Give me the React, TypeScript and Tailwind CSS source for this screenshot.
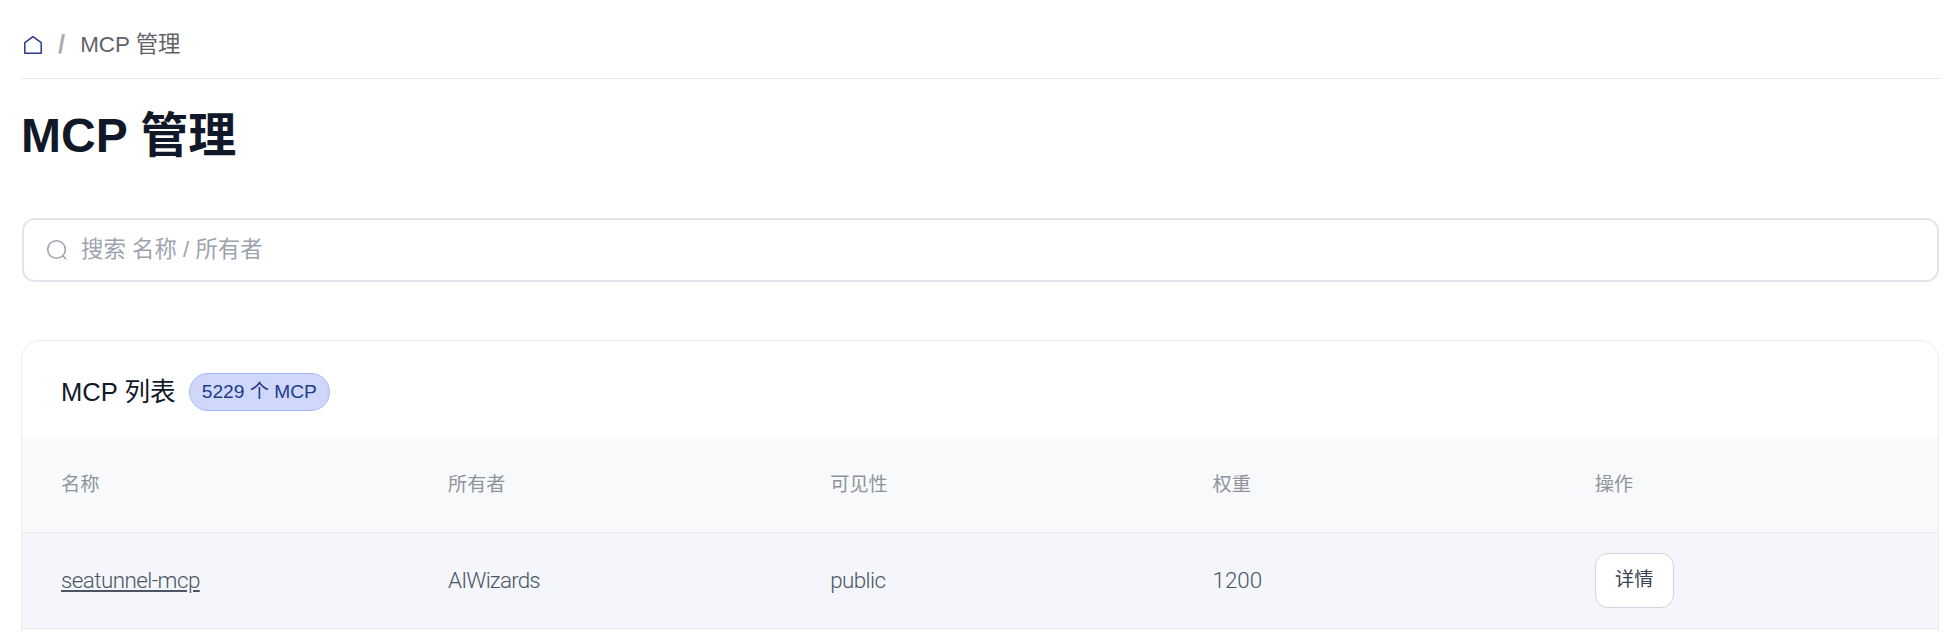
import React from 'react';

const FONT = '"Liberation Sans", "Noto Sans CJK SC", sans-serif';
const LIGHT = 'Roboto, "Noto Sans CJK SC", sans-serif';

const columns = ['名称', '所有者', '可见性', '权重', '操作'];

function HomeIcon() {
  return (
    <svg width="20" height="20" viewBox="0 0 20 20" fill="none" stroke="#2a3a8f" strokeWidth="1.5" strokeLinejoin="round">
      <path d="M1.8 18.3V7.6L10 1.6l8.2 6v10.7z" />
    </svg>
  );
}

function SearchIcon() {
  return (
    <svg width="22" height="22" viewBox="0 0 22 22" fill="none" stroke="#9ca3af" strokeWidth="1.5" strokeLinecap="round">
      <circle cx="10.5" cy="10.5" r="8.8" />
      <path d="M17.2 17.2l2.4 2.4" />
    </svg>
  );
}

export default function App() {
  return (
    <div className="h-[632px] overflow-hidden bg-white pl-[22px] pr-[14px]" style={{ fontFamily: FONT }}>
      {/* Breadcrumb */}
      <nav className="flex h-[79px] items-center border-b border-[#e8e9ec] pt-[11px] pl-px">
        <HomeIcon />
        <span className="ml-[15px] text-[25.6px] font-bold text-[#a9adb4]">/</span>
        <span className="ml-[15px] text-[22.4px] text-[#5f6368]">MCP 管理</span>
      </nav>

      <h1 className="mt-[28px] -ml-px text-[48px] font-bold leading-[58px] text-[#111827]">MCP 管理</h1>

      {/* Search */}
      <div className="mt-[53px] mr-px flex h-[64px] items-center rounded-[13px] border-2 border-[#e3e4ea] bg-white pl-[22px]">
        <SearchIcon />
        <span className="ml-[13px] text-[22.4px] text-[#9ca3af]">搜索 名称 / 所有者</span>
      </div>

      {/* MCP list card */}
      <section className="mt-[58px] mr-px -ml-px min-h-[400px] overflow-hidden rounded-[19px] border border-[#eceef1] bg-white">
        <div className="flex h-[96px] items-center gap-[13px] px-[39px] pt-[6px]">
          <h2 className="text-[25.6px] text-[#111827]">MCP 列表</h2>
          <span className="flex h-[38px] items-center rounded-full border border-[#a5b4fc] bg-[#cfd8fb] px-[12px] text-[19.2px] text-[#1e3a8a]">
            5229 个 MCP
          </span>
        </div>
        <table className="w-full table-fixed border-collapse text-left">
          <thead>
            <tr className="h-[95px] border-b border-[#e9ebef] bg-[#f8f9fb]">
              {columns.map((col, i) => (
                <th key={col} className={i === 0 ? 'w-[387px] px-[39px] pt-[2px] text-[19.2px] font-normal text-[#8e939c]' : 'px-[39px] pt-[2px] text-[19.2px] font-normal text-[#8e939c]'}>
                  {col}
                </th>
              ))}
            </tr>
          </thead>
          <tbody>
            <tr className="h-[96px] border-b border-[#e9ebef] bg-[#f5f6fb] text-[22.4px] font-light text-[#4b5563]" style={{ fontFamily: LIGHT }}>
              <td className="px-[39px] pt-[2px] tracking-[-0.55px]">
                <a className="underline" href="#">seatunnel-mcp</a>
              </td>
              <td className="px-[39px] pt-[2px] tracking-[-0.8px]">AIWizards</td>
              <td className="px-[39px] pt-[2px] tracking-[-0.6px]">public</td>
              <td className="px-[39px] pt-[2px]">1200</td>
              <td className="px-[39px]">
                <button
                  className="h-[55px] w-[79px] rounded-[13px] border border-[#d1d5db] bg-white text-[19.2px] font-normal text-[#374151]"
                  style={{ fontFamily: FONT }}
                >
                  详情
                </button>
              </td>
            </tr>
          </tbody>
        </table>
      </section>
    </div>
  );
}
